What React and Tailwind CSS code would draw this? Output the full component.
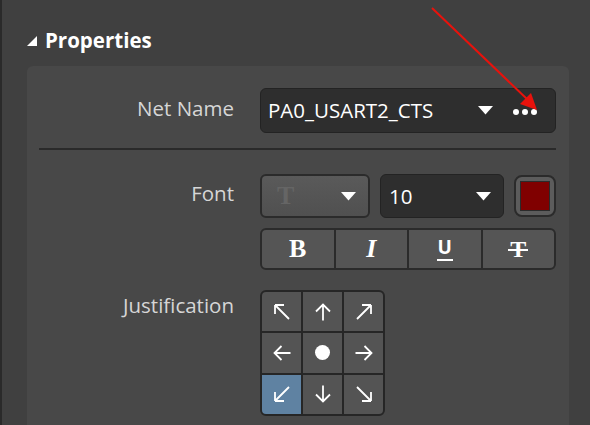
import React from 'react';

const UI_FONT = { fontFamily: '"Open Sans", "Noto Sans", sans-serif' };
const SERIF = { fontFamily: '"Liberation Serif", "DejaVu Serif", serif' };

// small white caret used by the combo boxes
const Caret = () => (
  <svg width="15" height="9" viewBox="0 0 15 9">
    <path d="M0 0h15L7.5 8.5z" fill="#fff" />
  </svg>
);

// straight arrow pointing up, rotated for the other sides
const StraightArrow = ({ rotate = 0 }) => (
  <svg width="20" height="20" viewBox="0 0 20 20" style={{ transform: `rotate(${rotate}deg)` }}>
    <path d="M10 2.5V18.5M3 9.5L10 2.5L17 9.5" fill="none" stroke="#fff" strokeWidth="1.8" />
  </svg>
);

// diagonal arrow pointing up-left, rotated for the other corners
const DiagonalArrow = ({ rotate = 0 }) => (
  <svg width="20" height="20" viewBox="0 0 20 20" style={{ transform: `rotate(${rotate}deg)` }}>
    <path d="M3 3L17 17M3 3H12M3 3V12" fill="none" stroke="#fff" strokeWidth="1.8" />
  </svg>
);

const FieldLabel = ({ children, className = '' }) => (
  <div className={`w-[207px] shrink-0 text-right text-[20.5px] text-[#d6d6d6] ${className}`}>
    {children}
  </div>
);

const JUSTIFY = [
  { diag: 0 },
  { straight: 0 },
  { diag: 90 },
  { straight: -90 },
  { dot: true },
  { straight: 90 },
  { diag: -90, active: true },
  { straight: 180 },
  { diag: 180 },
];

export default function App() {
  return (
    <div
      className="relative w-[590px] h-[425px] overflow-hidden bg-[#404040] border-l-2 border-[#2a2a2a]"
      style={UI_FONT}
    >
      {/* Section header */}
      <div className="flex items-center h-[24px] mt-[28px] pl-[25px]">
        <svg width="10" height="10" viewBox="0 0 10 10" className="mt-[1px]">
          <path d="M10 0V10H0z" fill="#fff" />
        </svg>
        <span className="ml-[8px] text-[20.5px] font-bold text-white leading-none">Properties</span>
      </div>

      {/* Property panel */}
      <div className="ml-[25px] mt-[14px] w-[542px] h-[400px] rounded-t-md bg-[#484848]">
        {/* Net name */}
        <div className="flex pt-[22px]">
          <FieldLabel className="pt-[5px]">Net Name</FieldLabel>
          <div className="ml-[26px] w-[296px] h-[45px] flex items-center rounded-md bg-[#2e2e2e] border border-[#232323] pl-[7px] pr-[18px]">
            <span className="text-[20.5px] text-white">PA0_USART2_CTS</span>
            <span className="ml-auto"><Caret /></span>
            <span className="ml-[20px] flex gap-[3px] mt-[2px]">
              <span className="w-[6px] h-[6px] rounded-full bg-white" />
              <span className="w-[6px] h-[6px] rounded-full bg-white" />
              <span className="w-[6px] h-[6px] rounded-full bg-white" />
            </span>
          </div>
        </div>

        <div className="ml-[12px] mt-[15px] w-[517px] h-[2px] bg-[#2a2a2a]" />

        {/* Font */}
        <div className="flex pt-[24px]">
          <FieldLabel className="pt-[4px]">Font</FieldLabel>
          <div className="ml-[26px] w-[296px]">
            <div className="flex items-center gap-[10px]">
              <div className="w-[110px] h-[44px] flex items-center rounded-md border-2 border-[#2b2b2b] bg-gradient-to-b from-[#5a5a5a] to-[#505050] pl-[15px] pr-[12px]">
                <span className="text-[26px] font-bold text-[#656565] leading-none" style={SERIF}>T</span>
                <span className="ml-auto"><Caret /></span>
              </div>
              <div className="w-[124px] h-[44px] flex items-center rounded-md bg-[#2e2e2e] border border-[#232323] pl-[8px] pr-[12px]">
                <span className="text-[20.5px] text-white">10</span>
                <span className="ml-auto"><Caret /></span>
              </div>
              <div className="w-[42px] h-[42px] rounded-[8px] border-2 border-[#2b2b2b] bg-[#5c5c5c] p-[4px]">
                <div className="w-full h-full bg-[#800000] border border-[#2b2b2b]" />
              </div>
            </div>

            <div className="mt-[10px] h-[42px] flex rounded-md border-2 border-[#2b2b2b] bg-[#555] overflow-hidden">
              <div className="flex-1 flex items-center justify-center border-r-2 border-[#2b2b2b]">
                <span className="text-[26px] font-bold text-white leading-none" style={SERIF}>B</span>
              </div>
              <div className="flex-1 flex items-center justify-center border-r-2 border-[#2b2b2b]">
                <span className="text-[26px] font-bold italic text-white leading-none" style={SERIF}>I</span>
              </div>
              <div className="flex-1 flex items-center justify-center border-r-2 border-[#2b2b2b]">
                <span className="flex flex-col items-center">
                  <span className="text-[19px] font-bold text-white leading-none" style={UI_FONT}>U</span>
                  <span className="mt-[2px] w-[16px] h-[2px] bg-white" />
                </span>
              </div>
              <div className="flex-1 flex items-center justify-center">
                <span className="relative text-[24px] font-bold text-white leading-none" style={SERIF}>
                  T
                  <span className="absolute left-[-2px] right-[-2px] top-[12px] h-[2px] bg-white" />
                </span>
              </div>
            </div>
          </div>
        </div>

        {/* Justification */}
        <div className="flex pt-[20px]">
          <FieldLabel className="pt-0">Justification</FieldLabel>
          <div className="ml-[26px] w-[125px] h-[126px] grid grid-cols-3 grid-rows-3 gap-[2px] rounded-md border-2 border-[#262626] bg-[#262626] overflow-hidden">
            {JUSTIFY.map(({ diag, straight, dot, active }, i) => (
              <div
                key={i}
                className={`flex items-center justify-center ${active ? 'bg-[#5f82a2]' : 'bg-[#545454]'}`}
              >
                {dot && <span className="w-[15px] h-[15px] rounded-full bg-white" />}
                {diag !== undefined && <DiagonalArrow rotate={diag} />}
                {straight !== undefined && <StraightArrow rotate={straight} />}
              </div>
            ))}
          </div>
        </div>
      </div>

      {/* Red callout arrow */}
      <svg className="absolute left-0 top-0 pointer-events-none" width="590" height="425">
        <line x1="430" y1="8" x2="526" y2="100" stroke="#e8120c" strokeWidth="2" />
        <path d="M535 110L518 104L529 93z" fill="#e8120c" />
      </svg>
    </div>
  );
}
